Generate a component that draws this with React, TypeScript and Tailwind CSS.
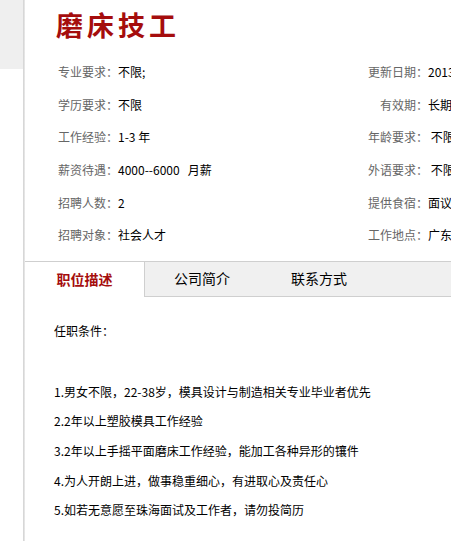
import React from 'react';

const font = { fontFamily: '"SimSun", "Noto Sans CJK SC", "Liberation Sans", sans-serif' };

const rows: [string, string, string, string][] = [
  ['专业要求：', '不限;', '更新日期：', '2013-05-20'],
  ['学历要求：', '不限', '有效期：', '长期有效'],
  ['工作经验：', '1-3 年', '年龄要求：', ' 不限'],
  ['薪资待遇：', '4000--6000\u00a0\u00a0 月薪', '外语要求：', ' 不限'],
  ['招聘人数：', '2', '提供食宿：', '面议'],
  ['招聘对象：', '社会人才', '工作地点：', '广东珠海'],
];

const duties = [
  '1.男女不限，22-38岁，模具设计与制造相关专业毕业者优先',
  '2.2年以上塑胶模具工作经验',
  '3.2年以上手摇平面磨床工作经验，能加工各种异形的镶件',
  '4.为人开朗上进，做事稳重细心，有进取心及责任心',
  '5.如若无意愿至珠海面试及工作者，请勿投简历',
];

export default function App() {
  return (
    <div className="w-[451px] h-[541px] overflow-hidden bg-white flex" style={font}>
      {/* left gutter */}
      <div className="w-[23px] shrink-0">
        <div className="h-[69px] bg-[#efefef]" />
      </div>
      <div className="w-[2px] shrink-0 bg-gradient-to-r from-[#d0d0d0] to-[#ececec]" />

      {/* main panel */}
      <div className="flex-1 min-w-0 overflow-hidden">
        <div className="w-[560px]">
          <h1 className="h-[50px] leading-[50px] pl-[31px] text-[27px] font-bold tracking-[4px] text-[#a50d0d]">
            磨床技工
          </h1>

          <div className="mt-[6px] pl-[33px] text-[12px]">
            {rows.map(([l1, v1, l2, v2]) => (
              <div key={l1} className="h-[32.6px] flex items-center">
                <div className="w-[310px] flex">
                  <span className="text-[#666]">{l1}</span>
                  <span className="text-black whitespace-pre">{v1}</span>
                </div>
                <div className="flex">
                  <span className="w-[60px] text-right text-[#666]">{l2}</span>
                  <span className="text-black whitespace-pre">{v2}</span>
                </div>
              </div>
            ))}
          </div>

          {/* tabs */}
          <div className="mt-[9px] border-t border-[#cfcfcf] flex h-[36px]">
            <div className="w-[119px] flex items-center justify-center text-[14px] font-bold text-[#a50d0d]">
              职位描述
            </div>
            <div className="flex-1 bg-[#f0f0f0] border-l border-b border-[#cfcfcf] flex items-center text-[14px] text-black">
              <span className="ml-[29px]">公司简介</span>
              <span className="ml-[61px]">联系方式</span>
            </div>
          </div>

          {/* content */}
          <div className="pl-[29px] text-[12px] text-black">
            <div className="mt-[19px] h-[30px] leading-[30px]">任职条件：</div>
            <div className="mt-[31px]">
              {duties.map((d) => (
                <div key={d} className="h-[29.7px] leading-[29.7px]">{d}</div>
              ))}
            </div>
          </div>
        </div>
      </div>
    </div>
  );
}
